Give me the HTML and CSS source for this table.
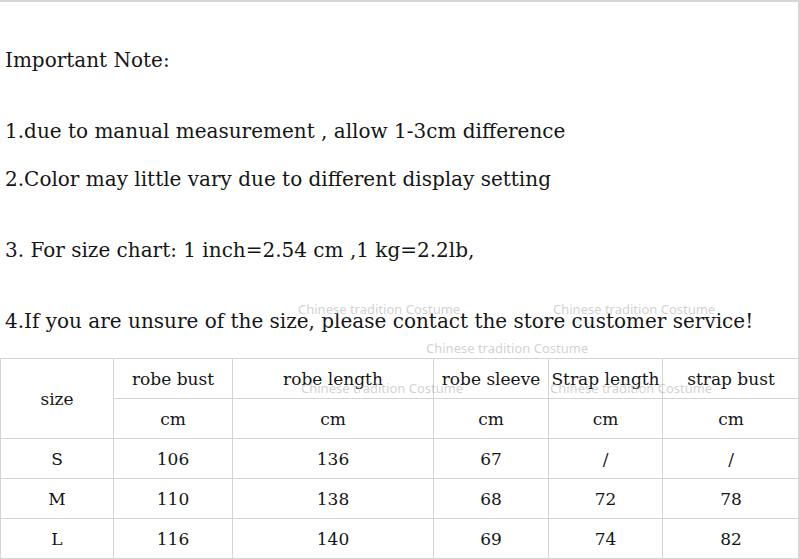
FILE: index.html
```html
<!DOCTYPE html>
<html>
<head>
<meta charset="utf-8">
<link rel="stylesheet" href="styles.css">
</head>
<body>
<div class="page">
  <div class="notes">
    <p class="line">Important Note:</p>
    <p class="line gap">1.due to manual measurement , allow 1-3cm difference</p>
    <p class="line">2.Color may little vary due to different display setting</p>
    <p class="line gap">3. For size chart: 1 inch=2.54 cm ,1 kg=2.2lb,</p>
    <p class="line gap">4.If you are unsure of the size, please contact the store customer service!</p>
  </div>
  <table class="chart">
    <colgroup>
      <col class="c1"><col class="c2"><col class="c3"><col class="c4"><col class="c5"><col class="c6">
    </colgroup>
    <tr><td rowspan="2">size</td><td>robe bust</td><td>robe length</td><td>robe sleeve</td><td>Strap length</td><td>strap bust</td></tr>
    <tr><td>cm</td><td>cm</td><td>cm</td><td>cm</td><td>cm</td></tr>
    <tr><td>S</td><td>106</td><td>136</td><td>67</td><td>/</td><td>/</td></tr>
    <tr><td>M</td><td>110</td><td>138</td><td>68</td><td>72</td><td>78</td></tr>
    <tr><td>L</td><td>116</td><td>140</td><td>69</td><td>74</td><td>82</td></tr>
  </table>
  <span class="wm wm1">Chinese tradition Costume</span>
  <span class="wm wm2">Chinese tradition Costume</span>
  <span class="wm wm3">Chinese tradition Costume</span>
  <span class="wm wm4">Chinese tradition Costume</span>
  <span class="wm wm5">Chinese tradition Costume</span>
</div>
</body>
</html>
```
FILE: styles.css
```css
html, body {
  margin: 0;
  padding: 0;
  background: #ffffff;
}
.page {
  position: relative;
  width: 800px;
  height: 559px;
  box-sizing: border-box;
  border-top: 2px solid #d6d6d6;
  border-right: 2px solid #d6d6d6;
  overflow: hidden;
  font-family: "DejaVu Serif", "Liberation Serif", serif;
  color: #151515;
}
.notes {
  padding: 34px 0 0 5px;
}
.line {
  margin: 0;
  font-size: 20px;
  line-height: 48px;
  white-space: nowrap;
}
.gap {
  margin-top: 23px;
}
.chart {
  margin-top: 13px;
  border-collapse: collapse;
  table-layout: fixed;
  width: 799px;
  font-size: 17px;
}
.chart td {
  border: 1px solid #d4d4d4;
  height: 39px;
  padding: 0;
  text-align: center;
  vertical-align: middle;
  white-space: nowrap;
}
.c1 { width: 113px; }
.c2 { width: 119px; }
.c3 { width: 201px; }
.c4 { width: 115px; }
.c5 { width: 114px; }
.c6 { width: 137px; }
.wm {
  position: absolute;
  font-family: "Noto Sans", "DejaVu Sans", sans-serif;
  font-size: 13px;
  line-height: 13px;
  color: rgba(170, 170, 170, 0.55);
  white-space: nowrap;
  pointer-events: none;
}
.wm1 { left: 298px; top: 301px; }
.wm2 { left: 553px; top: 301px; }
.wm3 { left: 426px; top: 340px; }
.wm4 { left: 301px; top: 380px; }
.wm5 { left: 550px; top: 380px; }
```
